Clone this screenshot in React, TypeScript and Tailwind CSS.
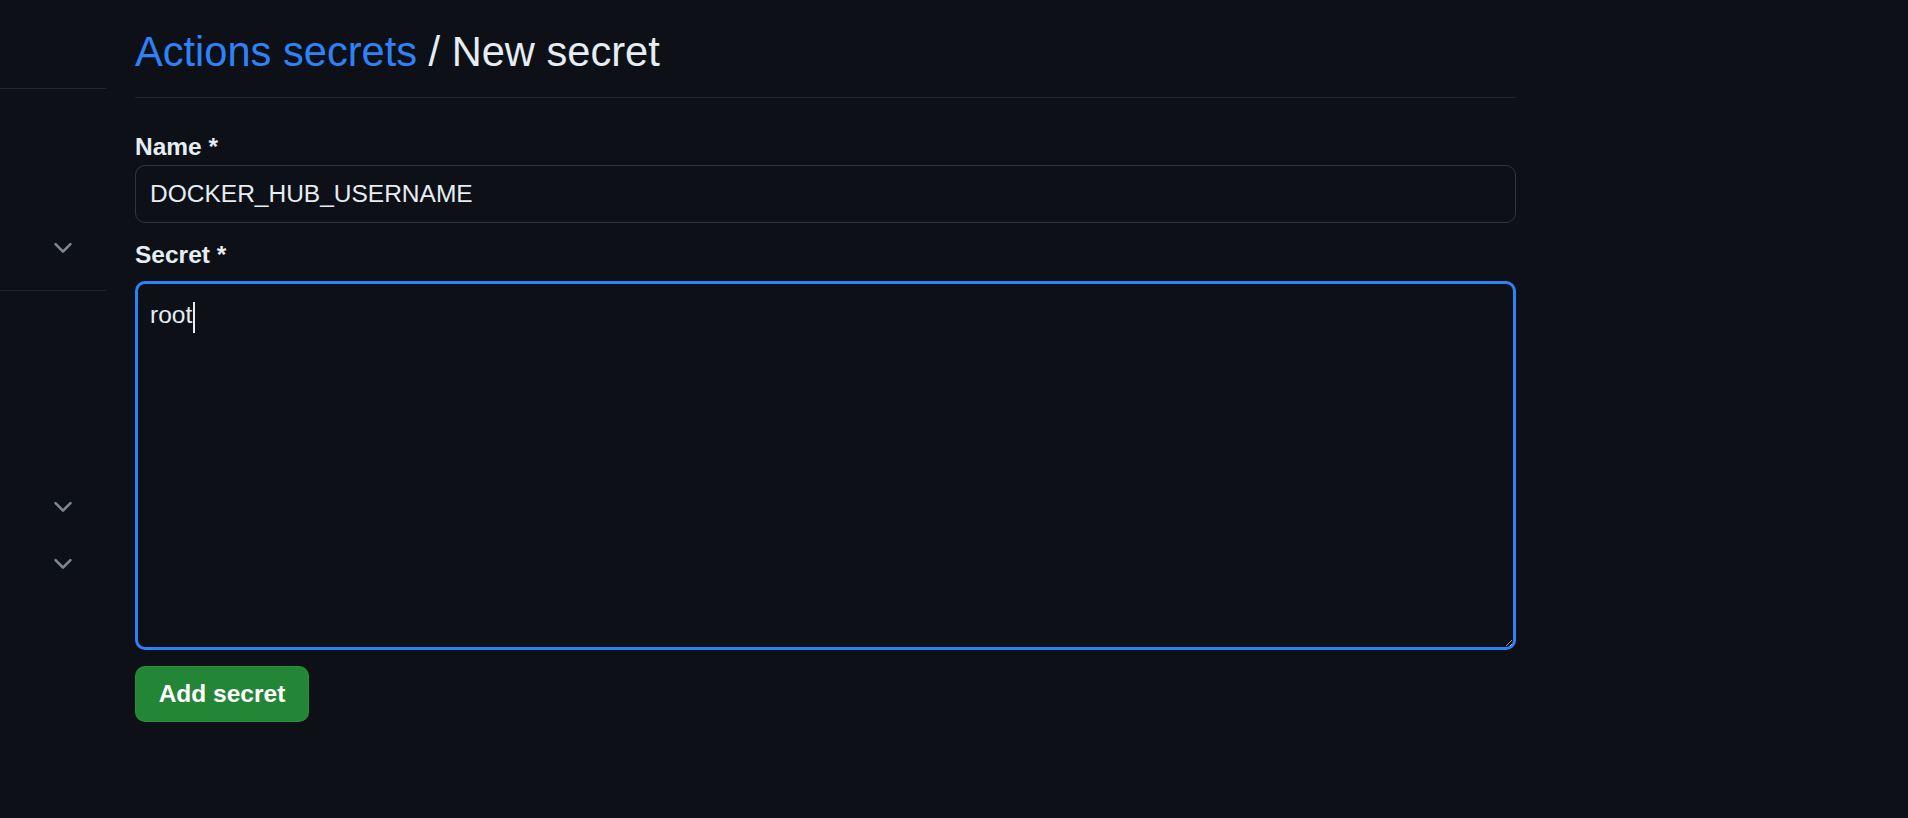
import React from 'react';

const Chevron: React.FC = () => (
  <svg viewBox="0 0 16 16" width="28" height="28" fill="#7d8590" aria-hidden="true">
    <path d="M12.78 5.22a.749.749 0 0 1 0 1.06l-4.25 4.25a.749.749 0 0 1-1.06 0L3.22 6.28a.749.749 0 1 1 1.06-1.06L8 8.939l3.72-3.719a.749.749 0 0 1 1.06 0Z" />
  </svg>
);

const App: React.FC = () => {
  return (
    <div
      className="min-h-screen w-full bg-[#0d1117] text-[#e6edf3] flex"
      style={{ fontFamily: '"Liberation Sans", Arial, sans-serif' }}
    >
      {/* left nav, cut off */}
      <div className="w-[106px] shrink-0 flex flex-col">
        <div className="h-[89px] border-b border-[#21262d]"></div>
        <div className="h-[202px] border-b border-[#21262d] flex flex-col justify-end">
          <div className="h-[88px] pt-[4px] flex items-center justify-end pr-[29px]">
            <Chevron />
          </div>
        </div>
        <div className="pt-[187px] flex flex-col">
          <div className="h-[57px] flex items-center justify-end pr-[29px]">
            <Chevron />
          </div>
          <div className="h-[57px] flex items-center justify-end pr-[29px]">
            <Chevron />
          </div>
        </div>
      </div>

      {/* main */}
      <div className="ml-[29px] w-[1381px] shrink-0 pt-[20px]">
        <h1 className="text-[41.6px] leading-[63px] font-normal pb-[14px] border-b border-[#21262d]">
          <span className="text-[#2f81f7]">Actions secrets</span> / New secret
        </h1>

        <form className="flex flex-col" onSubmit={(e) => e.preventDefault()}>
          <label className="mt-[31px] text-[24.5px] leading-[36px] font-bold">Name *</label>
          <div className="mt-[0px] h-[58px] rounded-[10px] border border-[#30363d] bg-[#0d1117] flex items-center px-[14px] text-[24.5px]">
            DOCKER_HUB_USERNAME
          </div>

          <label className="mt-[14px] text-[24.5px] leading-[36px] font-bold">Secret *</label>
          <div className="relative mt-[8px]">
            <textarea
              defaultValue="root"
              className="block w-full h-[369px] rounded-[10px] border-[3px] border-[#2f81f7] bg-[#0d1117] text-[#e6edf3] text-[24.5px] leading-[37px] px-[12px] py-[12px] outline-none [color-scheme:dark]"
              style={{ fontFamily: '"Liberation Sans", Arial, sans-serif' }}
            />
            <span className="absolute left-[58px] top-[21px] w-[2px] h-[31px] bg-[#e6edf3]"></span>
          </div>

          <div className="mt-[16px]">
            <button
              type="submit"
              className="w-[174px] h-[56px] rounded-[10px] bg-[#238636] border border-[#2ea043]/40 text-white text-[24.5px] font-bold"
            >
              Add secret
            </button>
          </div>
        </form>
      </div>
    </div>
  );
};

export default App;
